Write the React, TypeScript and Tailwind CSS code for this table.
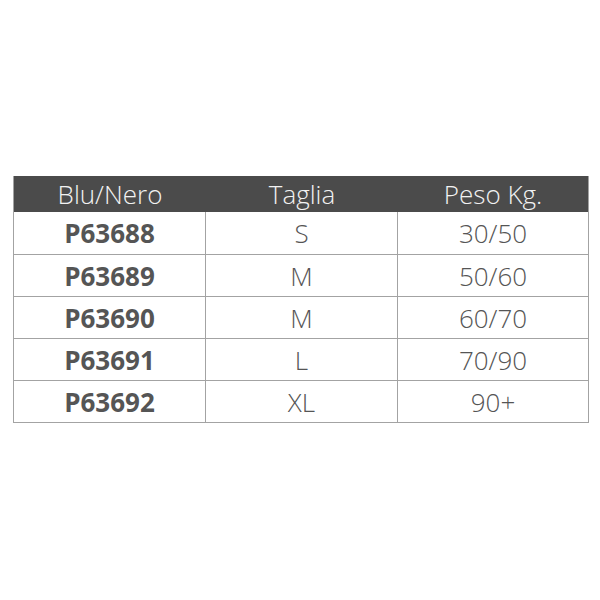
const ROWS: [string, string, string][] = [
  ["P63688", "S", "30/50"],
  ["P63689", "M", "50/60"],
  ["P63690", "M", "60/70"],
  ["P63691", "L", "70/90"],
  ["P63692", "XL", "90+"],
];

export default function App() {
  return (
    <div className="flex h-[600px] w-[600px] items-start bg-white pl-[13px] pt-[176px] font-['Open_Sans',sans-serif]">
      <div className="w-[576px] border-x-[1.5px] border-b-[1.5px] border-[#a3a3a3]">
        <div className="grid h-[36px] grid-cols-[192px_192px_1fr] bg-[#4b4b4b] text-[26px] font-light leading-none text-[#f2f2f2]">
          <div className="flex items-center justify-center">Blu/Nero</div>
          <div className="flex items-center justify-center">Taglia</div>
          <div className="flex items-center justify-center">Peso Kg.</div>
        </div>
        {ROWS.map(([code, size, weight], i) => (
          <div
            key={code}
            className={`grid h-[42px] grid-cols-[192px_192px_1fr] text-[26px] leading-none text-[#555] ${
              i > 0 ? "border-t-[1.5px] border-[#a3a3a3]" : ""
            }`}
          >
            <div className="flex items-center justify-center border-r-[1.5px] border-[#a3a3a3] font-bold">
              {code}
            </div>
            <div className="flex items-center justify-center border-r-[1.5px] border-[#a3a3a3] font-light">
              {size}
            </div>
            <div className="flex items-center justify-center font-light">{weight}</div>
          </div>
        ))}
      </div>
    </div>
  );
}
